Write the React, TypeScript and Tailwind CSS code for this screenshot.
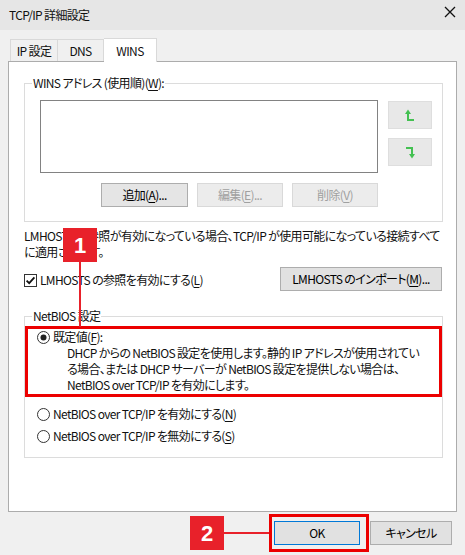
import React from 'react';

const font = {
  fontFamily: '"Noto Sans CJK JP", "Noto Sans", sans-serif',
};

function Key({ k }: { k: string }) {
  return (
    <>
      (<span className="underline underline-offset-2">{k}</span>)
    </>
  );
}

function Btn({
  children,
  disabled = false,
  primary = false,
  className = '',
}: {
  children: React.ReactNode;
  disabled?: boolean;
  primary?: boolean;
  className?: string;
}) {
  const look = disabled
    ? 'bg-[#ececec] border-[#d9d9d9] text-[#a0a0a0]'
    : primary
    ? 'bg-[#e1e1e1] border-[#0078d7] text-black'
    : 'bg-[#e1e1e1] border-[#adadad] text-black';
  return (
    <div className={`flex items-center justify-center border h-[24px] ${look} ${className}`}>
      {children}
    </div>
  );
}

function Radio({ on = false }: { on?: boolean }) {
  return (
    <svg width="13" height="13" viewBox="0 0 13 13" className="shrink-0">
      <circle cx="6.5" cy="6.5" r="6" fill="white" stroke="#333" strokeWidth="1" />
      {on && <circle cx="6.5" cy="6.5" r="3" fill="#222" />}
    </svg>
  );
}

function Check() {
  return (
    <svg width="13" height="13" viewBox="0 0 13 13" className="shrink-0">
      <rect x="0.5" y="0.5" width="12" height="12" fill="white" stroke="#333" />
      <path d="M2.6 6.6 L5.2 9.2 L10.4 3.4" fill="none" stroke="#111" strokeWidth="1.8" />
    </svg>
  );
}

function UpArrow() {
  return (
    <svg width="10" height="13" viewBox="0 0 10 13">
      <path d="M3 3 V11 H9" fill="none" stroke="#44c152" strokeWidth="2" />
      <path d="M0 5 L3 0.5 L6 5 Z" fill="#44c152" />
    </svg>
  );
}

function DownArrow() {
  return (
    <svg width="10" height="13" viewBox="0 0 10 13">
      <path d="M1 2 H7 V10" fill="none" stroke="#44c152" strokeWidth="2" />
      <path d="M4 8 L7 12.5 L10 8 Z" fill="#44c152" />
    </svg>
  );
}

export default function App() {
  return (
    <div
      className="relative w-[465px] h-[555px] bg-[#f0f0f0] overflow-hidden text-[12px] tracking-[-0.65px] text-[#111] [font-feature-settings:'palt']"
      style={font}
    >
      {/* title bar */}
      <div className="h-[30px] bg-[#e6e6e6] flex items-center justify-between pl-[9px] pr-[9px]">
        <span className="text-[12px]">TCP/IP 詳細設定</span>
        <svg width="12" height="12" viewBox="0 0 12 12" className="mb-[6px]">
          <path d="M1 1 L11 11 M11 1 L1 11" stroke="#111" strokeWidth="1.3" />
        </svg>
      </div>

      {/* tabs */}
      <div className="flex items-end pl-[10px] mt-[8px] h-[23px]">
        <div className="h-[22px] w-[48px] border border-[#d9d9d9] border-b-0 flex items-center justify-center">
          IP 設定
        </div>
        <div className="h-[22px] w-[46px] border border-l-0 border-[#d9d9d9] border-b-0 flex items-center justify-center">
          DNS
        </div>
        <div className="relative z-10 h-[24px] w-[53px] -mb-[1px] bg-white border border-l-0 border-[#d9d9d9] border-b-0 flex items-center justify-center">
          WINS
        </div>
      </div>

      {/* panel */}
      <div className="mx-[8px] h-[451px] bg-white border border-[#acacac] flex flex-col pl-[15px] pr-[13px]">
        {/* WINS group */}
        <div className="relative mt-[21px] h-[139px] border border-[#dcdcdc] pl-[15px] pt-[16px]">
          <span className="absolute left-[7px] -top-[9px] bg-white px-[1px] leading-[16px]">
            WINS アドレス (使用順)<Key k="W" />:
          </span>
          <div className="flex gap-[10px]">
            <div className="w-[338px] h-[73px] border border-[#828282] bg-white" />
            <div className="flex flex-col gap-[9px] pt-[1px]">
              <div className="w-[44px] h-[28px] bg-[#e8e8e8] border border-[#dedede] flex items-center justify-center">
                <UpArrow />
              </div>
              <div className="w-[44px] h-[28px] bg-[#e8e8e8] border border-[#dedede] flex items-center justify-center">
                <DownArrow />
              </div>
            </div>
          </div>
          <div className="flex justify-end gap-[9px] w-[338px] mt-[10px]">
            <Btn className="w-[87px] bg-[#e5e5e5]">
              追加<Key k="A" />...
            </Btn>
            <Btn disabled className="w-[86px]">
              編集<Key k="E" />...
            </Btn>
            <Btn disabled className="w-[86px]">
              削除<Key k="V" />
            </Btn>
          </div>
        </div>

        {/* LMHOSTS text */}
        <div className="mt-[6px] leading-[16px] whitespace-nowrap">
          <div>LMHOSTS の参照が有効になっている場合、TCP/IP が使用可能になっている接続すべて</div>
          <div>に適用されます。</div>
        </div>

        <div className="flex items-center justify-between mt-[7px] h-[23px]">
          <div className="flex items-center gap-[3px] pt-[3px]">
            <Check />
            <span>
              LMHOSTS の参照を有効にする<Key k="L" />
            </span>
          </div>
          <Btn className="w-[162px] mr-[1px]">
            LMHOSTS のインポート<Key k="M" />...
          </Btn>
        </div>

        {/* NetBIOS group */}
        <div className="relative mt-[26px] h-[142px] border border-[#dcdcdc]">
          <span className="absolute left-[7px] -top-[9px] bg-white px-[1px] leading-[16px]">
            NetBIOS 設定
          </span>
          <div className="mt-[9px] border-[3px] border-[#ec0000] pl-[9px] pb-[1px]">
            <div className="flex items-center gap-[3px] h-[16px]">
              <Radio on />
              <span>
                既定値<Key k="F" />:
              </span>
            </div>
            <div className="pl-[30px] leading-[16px] whitespace-nowrap">
              <div>DHCP からの NetBIOS 設定を使用します。静的 IP アドレスが使用されてい</div>
              <div>る場合、または DHCP サーバーが NetBIOS 設定を提供しない場合は、</div>
              <div>NetBIOS over TCP/IP を有効にします。</div>
            </div>
          </div>
          <div className="flex items-center gap-[3px] h-[16px] mt-[9px] pl-[12px]">
            <Radio />
            <span>
              NetBIOS over TCP/IP を有効にする<Key k="N" />
            </span>
          </div>
          <div className="flex items-center gap-[3px] h-[16px] mt-[6px] pl-[12px]">
            <Radio />
            <span>
              NetBIOS over TCP/IP を無効にする<Key k="S" />
            </span>
          </div>
        </div>
      </div>

      {/* bottom buttons */}
      <div className="flex justify-end gap-[10px] pr-[13px] mt-[9px]">
        <Btn primary className="w-[86px]">
          OK
        </Btn>
        <Btn className="w-[82px]">キャンセル</Btn>
      </div>

      {/* callout 1 */}
      <div className="absolute left-[63px] top-[228px] w-[34px] h-[34px] bg-[#e8212a] text-white font-bold text-[22px] tracking-normal flex items-center justify-center" style={{ fontFamily: '"Liberation Sans", sans-serif' }}>
        1
      </div>
      <div className="absolute left-[79px] top-[262px] w-[2px] h-[65px] bg-[#e8212a]" />

      {/* callout 2 */}
      <div className="absolute left-[190px] top-[516px] w-[34px] h-[34px] bg-[#e8212a] text-white font-bold text-[22px] tracking-normal flex items-center justify-center" style={{ fontFamily: '"Liberation Sans", sans-serif' }}>
        2
      </div>
      <div className="absolute left-[224px] top-[532px] w-[45px] h-[2px] bg-[#e8212a]" />
      <div className="absolute left-[269px] top-[514px] w-[100px] h-[38px] border-[3px] border-[#ec0000]" />
    </div>
  );
}
